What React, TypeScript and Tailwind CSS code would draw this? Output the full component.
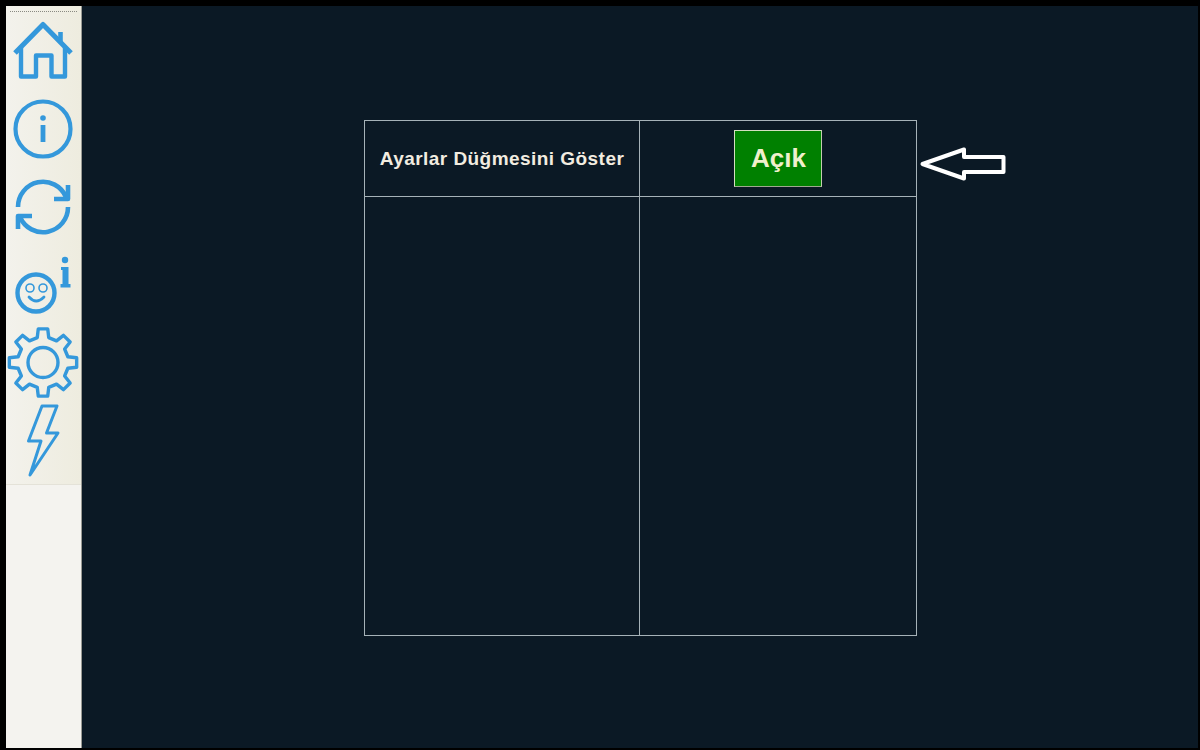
const BLUE = "#3498db";

// gear outline: 8 teeth, first one pointing up, in screen coords
function gearPath(cx: number, cy: number, outer: number, root: number) {
    const pts: string[] = [];
    const at = (r: number, deg: number) => {
        const a = ((deg - 90) * Math.PI) / 180;
        return `${(cx + r * Math.cos(a)).toFixed(2)} ${(cy + r * Math.sin(a)).toFixed(2)}`;
    };
    for (let i = 0; i < 8; i++) {
        const c = i * 45;
        pts.push(at(root, c - 13), at(outer, c - 8), at(outer, c + 8), at(root, c + 13));
    }
    return `M${pts.join(" L")} Z`;
}

function Row({ top, h, children }: { top: number; h: number; children: React.ReactNode }) {
    return (
        <svg viewBox={`6 ${top} 76 ${h}`} width={76} height={h} className="block shrink-0" fill="none" stroke={BLUE} strokeLinejoin="round">
            {children}
        </svg>
    );
}

function Sidebar() {
    return (
        <div className="w-[76px] shrink-0 h-full flex flex-col bg-[#f4f3ef] border-r border-[#9a9a94]">
            <div className="h-[479px] pt-[5px] flex flex-col bg-gradient-to-r from-[#f3f2ec] to-[#eeecdf] border-b border-[#e4e2d8]">
                <div className="mx-[4px] h-[1px] border-t border-dotted border-[#8a8a82]" />
                <div className="h-[8px]" />
                <Row top={20} h={70}>
                    <path d="M15 53 L43 24.5 L71 53" strokeWidth={5} />
                    <path d="M60.5 43 V32" strokeWidth={4.6} />
                    <path d="M21 48 V76.5 H36 V55.5 H51.5 V76.5 H65 V48" strokeWidth={4.4} />
                </Row>
                <Row top={90} h={80}>
                    <circle cx={43} cy={129} r={27.5} strokeWidth={4.2} />
                    <circle cx={43} cy={118} r={2.8} fill={BLUE} stroke="none" />
                    <path d="M43 125 V142" strokeWidth={4.8} />
                </Row>
                <Row top={170} h={75}>
                    <path d="M18 207 A25 25 0 0 1 66 197" strokeWidth={4.6} />
                    <path d="M68 185 V199 H54" strokeWidth={4.6} />
                    <path d="M68 207 A25 25 0 0 1 20 217" strokeWidth={4.6} />
                    <path d="M32 216 H18 V229" strokeWidth={4.6} />
                </Row>
                <Row top={245} h={75}>
                    <circle cx={36} cy={293} r={18.5} strokeWidth={4.4} />
                    <circle cx={30} cy={288} r={4} strokeWidth={1.6} />
                    <circle cx={43} cy={288} r={4} strokeWidth={1.6} />
                    <path d="M29 297 Q36 305 44 297" strokeWidth={2.8} strokeLinecap="round" />
                    <circle cx={65} cy={260} r={3.2} fill={BLUE} stroke="none" />
                    <path d="M61 267 H68.5 V284 H70.5 V287.5 H60.5 V284 H62.5 V270 H61 Z" fill={BLUE} stroke="none" />
                </Row>
                <Row top={320} h={80}>
                    <path d={gearPath(43, 362.5, 34, 25.5)} strokeWidth={3.4} />
                    <circle cx={43} cy={362.5} r={15} strokeWidth={3.4} />
                </Row>
                <Row top={400} h={79}>
                    <path d="M57 406 H42 L28.5 441 H41 L30 475 L58 433 H46.5 Z" strokeWidth={3} />
                </Row>
            </div>
        </div>
    );
}

export default function App() {
    return (
        <div className="w-[1200px] h-[750px] overflow-hidden bg-black pl-[6px] pr-[2px] pt-[6px] pb-[2px] flex" style={{ fontFamily: '"Liberation Sans", Arial, sans-serif' }}>
            <Sidebar />
            <div className="flex-1 h-full bg-[#0b1925] pl-[282px] pt-[114px] flex items-start">
                {/* settings table */}
                <div className="w-[553px] h-[516px] border border-[#a6b2b8] grid grid-cols-[275px_1fr] grid-rows-[76px_1fr]">
                    <div className="border-r border-b border-[#a6b2b8] flex items-center justify-center pt-[2px]">
                        <span className="text-[19px] font-bold tracking-[0.45px] text-[#f2ece0] whitespace-nowrap">Ayarlar Düğmesini Göster</span>
                    </div>
                    <div className="border-b border-[#a6b2b8] flex items-center justify-center">
                        <button className="w-[88px] h-[57px] -mt-[1px] pl-[1px] bg-[#008000] border border-t-[#d4dfc0] border-l-[#d4dfc0] border-r-[#c4ccb0] border-b-[#a0aa90] text-[26px] font-bold text-[#f0f0cc]">
                            Açık
                        </button>
                    </div>
                    <div className="border-r border-[#a6b2b8]" />
                    <div />
                </div>
                <svg width={90} height={40} viewBox="918 144 90 40" className="block shrink-0 mt-[24px] ml-[1px]" fill="none" stroke="#ffffff" strokeWidth={4} strokeLinejoin="round">
                    <path d="M922.5 164 L964 149.5 V157 H1003.5 V172 H964 V178.5 Z" />
                </svg>
            </div>
        </div>
    );
}
